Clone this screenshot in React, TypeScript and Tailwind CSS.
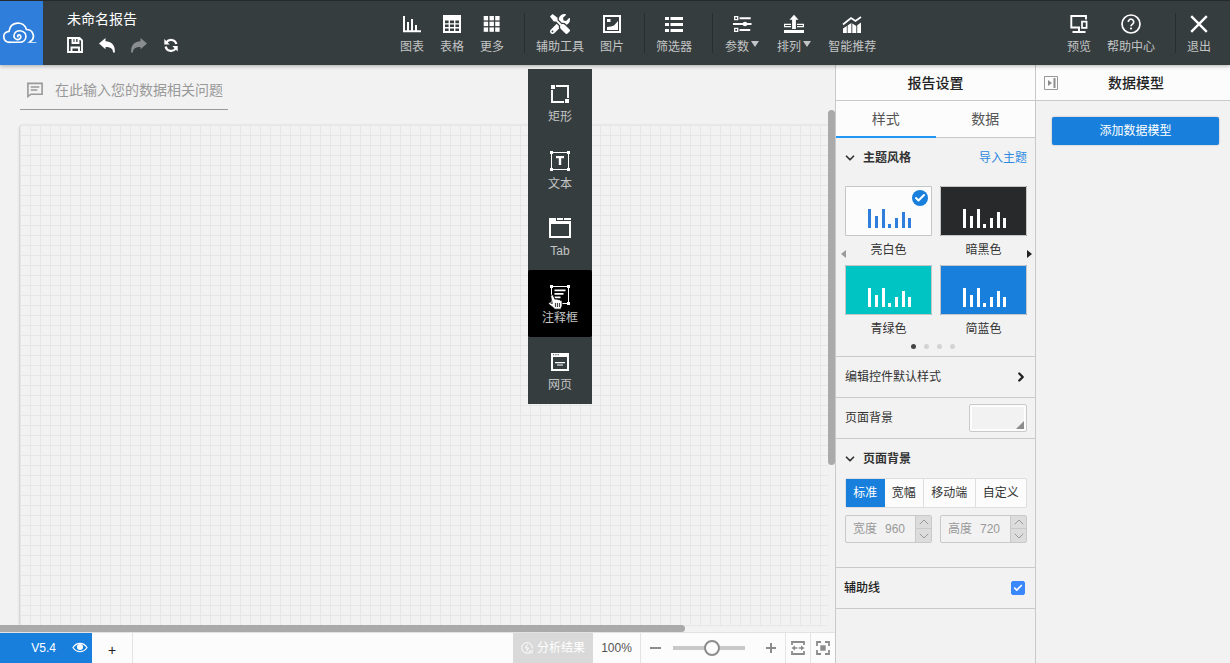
import { ReactNode } from "react";
import clsx from "clsx";
import { FaTools } from "react-icons/fa";
import { Check, ChevronDown, ChevronRight, ChevronUp } from "lucide-react";

type IconProps = { children: ReactNode; className?: string; size?: number };

const Icon = ({ children, className = "h-5 w-5", size = 20 }: IconProps) => (
  <svg
    viewBox={`0 0 ${size} ${size}`}
    className={className}
    fill="currentColor"
    aria-hidden="true"
  >
    {children}
  </svg>
);

const ChartIcon = () => (
  <Icon>
    <path d="M1 2h2v14.300H19v2H1zM5 8h2v8.500H5zM9 5h2v11.500H9zM13 11h2v5.500h-2z" />
  </Icon>
);

const TableIcon = () => (
  <Icon>
    <path
      fillRule="evenodd"
      d="M1 1h18v18H1zM3 6.500v2.700h3.600V6.500zM8 6.500v2.700h4V6.500zM13.400 6.500v2.700H17V6.500zM3 10.500v2.500h3.600v-2.500zM8 10.500v2.500h4v-2.500zM13.400 10.500v2.500H17v-2.500zM3 14.400V17h3.600v-2.600zM8 14.400V17h4v-2.600zM13.400 14.400V17H17v-2.600z"
    />
  </Icon>
);

const MoreIcon = () => (
  <Icon>
    {[2, 7.7, 13.4].map((y) =>
      [1.7, 7.5, 13.2].map((x) => (
        <rect key={`${x}-${y}`} x={x} y={y} width="4.4" height="4.4" />
      ))
    )}
  </Icon>
);

const PictureIcon = () => (
  <Icon>
    <path
      fillRule="evenodd"
      d="M1 1h18v18H1zM3 3v14h14V3z"
    />
    <path d="M5 5h3.500v3H5zM5 16v-3l4-.5 3-1 4-4.500v9z" />
  </Icon>
);

const ListIcon = () => (
  <Icon>
    <path d="M1 3h4v3H1zM6.500 3H19v3H6.500zM1 9h4v3H1zM6.500 9H19v3H6.500zM1 15h4v3H1zM6.500 15H19v3H6.500z" />
  </Icon>
);

const ParamIcon = () => (
  <Icon>
    <g fill="none" stroke="currentColor" strokeWidth="1.300">
      <path d="M2.700 2.700h3v3h-3zM2.700 14.300h3v3h-3z" />
    </g>
    <path d="M7.500 3.200H18.700v2H7.500zM1 9h18.500v2H1zM7.500 14.900H18.200v2H7.500z" />
    <circle cx="13" cy="10" r="2.300" />
  </Icon>
);

const ArrangeIcon = () => (
  <Icon>
    <path d="M10 .8l4.500 5h-2.600V15H8.100V5.800H5.500zM0 16h20v3H0z" />
    <path
      d="M7 10.400H.6v2.200H7M13 10.400h6.400v2.200H13"
      fill="none"
      stroke="currentColor"
      strokeWidth="1.200"
    />
  </Icon>
);

const TrendIcon = () => (
  <Icon>
    <path
      d="M1 10.500l8-6.500 4.500 3L19 3"
      fill="none"
      stroke="currentColor"
      strokeWidth="1.700"
    />
    <path d="M1 14.500l3.800-2.500v7H1zM5.600 11.500L9.400 9v10H5.600zM10.300 9.500l4 2.500v7h-4zM15.200 11.300L19 8.600V19h-3.800z" />
  </Icon>
);

const PreviewIcon = () => (
  <Icon>
    <path
      d="M17 5.500V2H2.300v11.500H11M10 13.500V18M3.500 18h13"
      fill="none"
      stroke="currentColor"
      strokeWidth="1.900"
    />
    <path
      d="M13 7.700h4.600v6.200H13z"
      fill="none"
      stroke="currentColor"
      strokeWidth="1.700"
    />
  </Icon>
);

const HelpIcon = () => (
  <Icon>
    <g fill="none" stroke="currentColor" strokeWidth="1.700">
      <circle cx="10" cy="10" r="9" />
      <path d="M7.300 8a2.700 2.700 0 1 1 4.300 2.100c-1 .7-1.600 1.100-1.600 2.200" />
    </g>
    <circle cx="10" cy="14.500" r="1.100" />
  </Icon>
);

const CloseIcon = () => (
  <Icon>
    <path
      d="M2.200 2.200l15.600 15.600M17.800 2.200L2.200 17.800"
      stroke="currentColor"
      strokeWidth="2.400"
    />
  </Icon>
);

const RectIcon = () => (
  <Icon>
    <path
      d="M6 2h12v12M2 6v12h12"
      fill="none"
      stroke="currentColor"
      strokeWidth="1.900"
    />
    <path d="M1 1h4v4H1zM15 15h4v4h-4z" />
  </Icon>
);

const Frame = () => (
  <>
    <path
      d="M1.500 1.500h17v17h-17z"
      fill="none"
      stroke="currentColor"
    />
    <path d="M0 0h3v3H0zM17 0h3v3h-3zM0 17h3v3H0zM17 17h3v3h-3z" />
  </>
);

const TextIcon = () => (
  <Icon>
    <Frame />
    <path d="M6 5h8v2.200h-2.800V14H8.800V7.200H6z" />
  </Icon>
);

const TabIcon = () => (
  <svg
    viewBox="0 0 22 20"
    className="h-5 w-[22px]"
    fill="currentColor"
    aria-hidden="true"
  >
    <path fillRule="evenodd" d="M0 0h7v3h15v17H0zM2 6v12h18V6z" />
    <path d="M8 0h6v2H8zM15 0h7v2h-7z" />
  </svg>
);

const NoteIcon = () => (
  <Icon>
    <Frame />
    <path d="M4.500 4.500h11v1.800h-11zM4.500 8h9v1.800h-9zM4.500 11.500h6v1.800h-6z" />
  </Icon>
);

const WebIcon = () => (
  <Icon>
    <path
      fillRule="evenodd"
      d="M1 1h18v18H1zM3 5v12h14V5zM3 2.200v1.100h1.200V2.200zM5.300 2.200v1.100h1.200V2.200zM7.600 2.200v1.100h1.200V2.200z"
    />
    <path d="M5 10h10v1.200H5zM7 12.500h6v1H7z" />
  </Icon>
);

const SaveIcon = () => (
  <Icon className="h-4 w-4" size={16}>
    <path
      d="M1 1h11.500L15 3.500V15H1zM5.500 1v5h6V1M4.500 15v-4.500h7.500V15"
      fill="none"
      stroke="currentColor"
      strokeWidth="1.900"
    />
    <path d="M7.500 2h1.700v3H7.500z" />
  </Icon>
);

const UndoIcon = ({ flipped }: { flipped?: boolean }) => (
  <Icon className={clsx("h-4 w-4", flipped && "-scale-x-100")} size={16}>
    <path d="M0 6.500L6.500 1v3.200C12.500 4.500 16.400 8 15.800 15.500H14c.2-4-2.500-5.600-7.500-5.600v2.300z" />
  </Icon>
);

const RefreshIcon = () => (
  <Icon className="h-4 w-4" size={16}>
    <path
      d="M3.400 5.400A5.600 5.600 0 0 1 13.400 7M12.600 11.600A5.600 5.600 0 0 1 2.600 9.500"
      fill="none"
      stroke="currentColor"
      strokeWidth="2.200"
    />
    <path d="M1.300 2v5.400h5.400zM14.700 14.500V9.100H9.300z" />
  </Icon>
);

const CloudLogo = () => (
  <svg viewBox="0 0 35 22" className="h-[22px] w-[35px]" aria-hidden="true">
    <g fill="none" stroke="#fff" strokeLinecap="round">
      <path
        d="M7 20.300C-1 20-1.300 10 6 9.300 7.500-1 21-1.500 23.500 7.500c7 0 9.500 9 3.500 12.200"
        strokeWidth="1.700"
      />
      <path
        d="M7 20.300h9.500c8 0 9-11 .5-11.500-6-.2-8 6.500-3.500 8.600 3.500 1.200 5.800-2.800 3.200-4.400-1.500-.6-2.700.8-1.800 1.800"
        strokeWidth="1.600"
      />
      <path d="M25 20.500h8" strokeWidth=".7" />
    </g>
  </svg>
);

const HandCursor = () => (
  <svg viewBox="0 0 16 16" className="h-4 w-4" aria-hidden="true">
    <path
      d="M3.300 1.200c.8-.8 1.700-.4 2.100.5l1.600 3.700c.5-.8 1.600-.7 1.900.1.600-.6 1.600-.4 1.900.4.700-.5 1.600-.1 1.800.7.9-.2 1.500.4 1.500 1.200v3.500c0 1.500-1.100 2-1.100 3.900H6.500C6 13.500 3.500 12.500.9 10.300c-.9-1 .1-2 1.200-1.600l2.200.9L2.800 2.700c-.1-.6.1-1.100.5-1.500z"
      fill="#fff"
      stroke="#000"
      strokeWidth=".8"
    />
    <path
      d="M7.400 9v4M9.400 9v4M11.400 9v4"
      stroke="#000"
      strokeWidth=".8"
    />
  </svg>
);

const insertItems = [
  { label: "矩形", icon: <RectIcon /> },
  { label: "文本", icon: <TextIcon /> },
  { label: "Tab", icon: <TabIcon /> },
  { label: "注释框", icon: <NoteIcon />, active: true },
  { label: "网页", icon: <WebIcon /> },
];

const themes = [
  { label: "亮白色", bg: "bg-[#fcfcfc]", bar: "text-[#2f7edb]", selected: true },
  { label: "暗黑色", bg: "bg-[#28292b]", bar: "text-white" },
  { label: "青绿色", bg: "bg-[#00c4c4]", bar: "text-white" },
  { label: "简蓝色", bg: "bg-[#197fdc]", bar: "text-white" },
];

const sizes = ["标准", "宽幅", "移动端", "自定义"];

type ToolProps = { icon: ReactNode; label: string; menu?: boolean };

const Tool = ({ icon, label, menu }: ToolProps) => (
  <button
    type="button"
    className={clsx(
      "flex h-16 flex-col items-center gap-[5px] pt-[13px] text-xs leading-4 text-white",
      menu ? "px-[9px]" : "px-2"
    )}
  >
    {icon}
    <span className="flex gap-0.5 whitespace-nowrap text-[#c3c5c5]">
      {label}
      {menu && (
        <svg viewBox="0 0 8 6" className="mt-0.5 h-1.5 w-2" fill="currentColor">
          <path d="M0 0h8L4 6z" />
        </svg>
      )}
    </span>
  </button>
);

const Divider = () => <div className="mr-[3px] ml-3 h-10 w-px bg-[#292e30]" />;

const InsertMenu = () => (
  <div className="absolute top-[68px] left-0 z-20 w-16 bg-[#363d3f]">
    {insertItems.map((item) => (
      <button
        type="button"
        key={item.label}
        className={clsx(
          "relative flex h-[67px] w-full flex-col items-center gap-[5px] pt-[15px] text-xs leading-4 text-white",
          item.active && "rounded-xs bg-black"
        )}
      >
        {item.icon}
        <span className="text-[#c3c5c5]">{item.label}</span>
        {item.active && (
          <span className="absolute top-6 left-5">
            <HandCursor />
          </span>
        )}
      </button>
    ))}
  </div>
);

const Header = () => (
  <header className="relative z-10 flex h-[65px] shrink-0 border-t border-[#26292b] bg-[#363d3f] shadow-[0_1px_4px_rgba(0,0,0,0.3)]">
    <a
      href="#"
      aria-label="首页"
      className="flex w-[43px] shrink-0 items-center bg-[#2f7edb] pl-[3px]"
    >
      <CloudLogo />
    </a>
    <div className="flex w-[349px] shrink-0 flex-col gap-2 pt-2 pl-6 text-white">
      <h1 className="text-sm leading-5">未命名报告</h1>
      <div className="flex gap-4">
        <button type="button" aria-label="保存">
          <SaveIcon />
        </button>
        <button type="button" aria-label="撤销">
          <UndoIcon />
        </button>
        <button type="button" aria-label="重做" className="text-[#8a8d8e]">
          <UndoIcon flipped />
        </button>
        <button type="button" aria-label="刷新">
          <RefreshIcon />
        </button>
      </div>
    </div>
    <nav className="flex items-center">
      <Tool icon={<ChartIcon />} label="图表" />
      <Tool icon={<TableIcon />} label="表格" />
      <Tool icon={<MoreIcon />} label="更多" />
      <Divider />
      <div className="relative">
        <Tool icon={<FaTools className="h-5 w-5" />} label="辅助工具" />
        <InsertMenu />
      </div>
      <Tool icon={<PictureIcon />} label="图片" />
      <Divider />
      <Tool icon={<ListIcon />} label="筛选器" />
      <Divider />
      <Tool icon={<ParamIcon />} label="参数" menu />
      <Tool icon={<ArrangeIcon />} label="排列" menu />
      <Tool icon={<TrendIcon />} label="智能推荐" />
    </nav>
    <div className="ml-auto flex items-center pr-[11px]">
      <Tool icon={<PreviewIcon />} label="预览" />
      <Tool icon={<HelpIcon />} label="帮助中心" />
      <Divider />
      <Tool icon={<CloseIcon />} label="退出" />
    </div>
  </header>
);

const Footer = () => (
  <footer className="flex h-[31px] shrink-0 border-t border-[#e3e3e3] bg-[#fcfcfc] text-xs text-[#555]">
    <button
      type="button"
      className="flex w-[92px] items-center justify-end gap-4 bg-[#197fdc] pr-1 text-white"
    >
      V5.4
      <svg viewBox="0 0 16 12" className="h-3 w-4" aria-hidden="true">
        <path
          d="M1 5.500c3.500-5.500 10.500-5.500 14 0-3.500 5.500-10.500 5.500-14 0z"
          fill="none"
          stroke="#fff"
          strokeWidth="1.200"
        />
        <circle cx="8" cy="5" r="3" fill="#fff" />
      </svg>
    </button>
    <button
      type="button"
      aria-label="新增页面"
      className="w-[41px] border-r border-[#e3e3e3] pt-1 text-sm text-[#222]"
    >
      +
    </button>
    <button
      type="button"
      disabled
      className="ml-auto flex w-20 items-center justify-center gap-1 bg-[#d9d9d9] text-white"
    >
      <svg viewBox="0 0 12 12" className="h-3 w-3" aria-hidden="true">
        <g fill="none" stroke="#fff">
          <path d="M9 10.300A5.300 5.300 0 1 1 11.300 6.500M9 8v3.500M11 8v3.500" />
          <path d="M6.500 2.500L4.500 6h3l-2 3.500" />
        </g>
      </svg>
      分析结果
    </button>
    <span className="flex w-12 items-center justify-center border-r border-[#e3e3e3]">
      100%
    </span>
    <div className="flex w-[145px] items-center gap-3 border-r border-[#e3e3e3] px-2 text-[#8c8c8c]">
      <button type="button" aria-label="缩小">
        <svg viewBox="0 0 12 12" className="h-3 w-3" aria-hidden="true">
          <path d="M1 6h11" stroke="currentColor" strokeWidth="2" />
        </svg>
      </button>
      <input
        type="range"
        aria-label="缩放"
        defaultValue={55}
        className="h-1 w-[72px] appearance-none bg-[#c9c9c9] [&::-webkit-slider-thumb]:h-4 [&::-webkit-slider-thumb]:w-4 [&::-webkit-slider-thumb]:appearance-none [&::-webkit-slider-thumb]:rounded-full [&::-webkit-slider-thumb]:border-2 [&::-webkit-slider-thumb]:border-[#8c8c8c] [&::-webkit-slider-thumb]:bg-[#fcfcfc]"
      />
      <button type="button" aria-label="放大" className="ml-auto">
        <svg viewBox="0 0 12 12" className="h-3 w-3" aria-hidden="true">
          <path d="M1 6h10M6 1v10" stroke="currentColor" strokeWidth="2" />
        </svg>
      </button>
    </div>
    <button
      type="button"
      aria-label="适应宽度"
      className="flex w-[25px] items-center justify-center border-r border-[#e3e3e3] text-[#8c8c8c]"
    >
      <svg viewBox="0 0 14 14" className="h-3.5 w-3.5" aria-hidden="true">
        <path
          d="M1 4V1h12v3M1 10v3h12v-3"
          fill="none"
          stroke="currentColor"
          strokeWidth="1.800"
        />
        <path d="M.5 7l3.500-2.500v1.700h2.300v1.600H4v1.700zM13.500 7L10 4.500v1.700H7.700v1.600H10v1.700z" fill="currentColor" />
      </svg>
    </button>
    <button
      type="button"
      aria-label="全屏"
      className="flex w-6 items-center justify-center text-[#8c8c8c]"
    >
      <svg viewBox="0 0 14 14" className="h-3.5 w-3.5" aria-hidden="true">
        <path
          d="M1 5V1h4M9 1h4v4M13 9v4H9M5 13H1V9"
          fill="none"
          stroke="currentColor"
          strokeWidth="1.800"
        />
        <path d="M4.300 4.300h5.400v5.400H4.300z" fill="currentColor" />
      </svg>
    </button>
  </footer>
);

const Workspace = () => (
  <main className="flex min-w-0 flex-1 flex-col">
    <label className="ml-5 flex h-[45px] w-52 shrink-0 items-center gap-3 border-b border-[#999] pt-1.5 pl-[7px]">
      <Icon className="h-4 w-4 shrink-0 text-[#999]" size={16}>
        <path
          d="M.9 1.400h14.200v10.800H4L.9 14.500z"
          fill="none"
          stroke="currentColor"
          strokeWidth="1.600"
        />
        <path d="M3.700 4.300h8.600v1.500H3.700zM3.700 7.300h6.600v1.500H3.700z" />
      </Icon>
      <input
        type="text"
        aria-label="数据相关问题"
        placeholder="在此输入您的数据相关问题"
        className="w-[173px] bg-transparent text-sm outline-none placeholder:text-[#999]"
      />
    </label>
    <div className="flex min-h-0 flex-1">
      <div className="flex min-w-0 flex-1 pt-[15px] pl-5">
        <div className="flex-1 rounded-tl-sm bg-[linear-gradient(#e6e6e6_1px,transparent_1px),linear-gradient(90deg,#e6e6e6_1px,transparent_1px)] bg-size-[10px_10px] shadow-[-1px_0_2px_rgba(0,0,0,0.15)]" />
      </div>
      <div className="w-[7px]">
        <div className="h-[69%] rounded-full bg-[#aaa]" />
      </div>
    </div>
    <div className="h-[7px] shrink-0">
      <div className="h-full w-[82%] rounded-r-full bg-[#aaa]" />
    </div>
    <Footer />
  </main>
);

const ThemeCard = ({ label, bg, bar, selected }: (typeof themes)[number]) => (
  <button type="button" className="relative flex flex-col text-xs leading-[29px]">
    <svg
      viewBox="0 0 87 50"
      className={clsx("h-[50px] w-full", bg, bar)}
      fill="currentColor"
      aria-hidden="true"
    >
      <path d="M23 23h3v19h-3zM30 30h3v12h-3zM37 23h3v19h-3zM43 38h3v4h-3zM50 32h3v10h-3zM57 26h3v16h-3zM63 32h3v10h-3z" />
      <path d="M.5.5h86v49H.5z" fill="none" stroke="#c6c6c6" />
    </svg>
    <span className="w-full text-center">{label}</span>
    {selected && (
      <span className="absolute top-1 right-1 flex h-4 w-4 items-center justify-center rounded-full bg-[#197fdc]">
        <Check className="h-3 w-3 text-white" strokeWidth={4} />
      </span>
    )}
  </button>
);

const SizeField = ({ label, value }: { label: string; value: number }) => (
  <div className="flex h-7 min-w-0 flex-1 rounded-xs border border-[#c9c9c9] text-xs text-[#999]">
    <label className="flex min-w-0 flex-1 items-center gap-2 pl-[7px]">
      <span className="shrink-0">{label}</span>
      <input
        type="text"
        disabled
        defaultValue={value}
        className="w-0 min-w-0 flex-1 bg-transparent"
      />
    </label>
    <div className="flex w-4 flex-col border-l border-[#c9c9c9] bg-[#dcdcdc]">
      <button
        type="button"
        disabled
        aria-label={`增加${label}`}
        className="flex h-[13px] items-center justify-center border-b border-[#c9c9c9]"
      >
        <ChevronUp className="h-4 w-4 shrink-0" strokeWidth={1.5} />
      </button>
      <button
        type="button"
        disabled
        aria-label={`减少${label}`}
        className="flex h-[13px] items-center justify-center"
      >
        <ChevronDown className="h-4 w-4 shrink-0" strokeWidth={1.5} />
      </button>
    </div>
  </div>
);

const SettingsPanel = () => (
  <aside className="flex w-[200px] shrink-0 flex-col border-l border-[#c9c9c9] text-xs text-[#333]">
    <h2 className="flex h-9 shrink-0 items-center justify-center border-b border-[#c9c9c9] bg-[#fcfcfc] text-sm font-medium text-[#222]">
      报告设置
    </h2>
    <div className="flex h-[37px] shrink-0 bg-[#fcfcfc] text-sm text-[#555]">
      <button type="button" className="flex-1 border-b-2 border-[#2196f3]">
        样式
      </button>
      <button type="button" className="flex-1 border-b border-[#c9c9c9]">
        数据
      </button>
    </div>

    <section className="border-b border-[#c9c9c9] pb-[7px]">
      <div className="flex h-10 items-center pr-2 pl-[7px]">
        <ChevronDown className="mr-1.5 h-3.5 w-3.5" strokeWidth={3} />
        <h3 className="font-bold">主题风格</h3>
        <a href="#" className="ml-auto text-[#2d8ae0]">
          导入主题
        </a>
      </div>
      <div className="relative px-2 pt-2 pl-[9px]">
        <div className="grid grid-cols-2 gap-x-2">
          {themes.map((theme) => (
            <ThemeCard key={theme.label} {...theme} />
          ))}
        </div>
        <button type="button" aria-label="上一页" className="absolute top-[72px] left-[5px]">
          <svg viewBox="0 0 5 8" className="h-2 w-[5px]">
            <path d="M5 0v8L0 4z" fill="#999" />
          </svg>
        </button>
        <button type="button" aria-label="下一页" className="absolute top-[72px] right-[3px]">
          <svg viewBox="0 0 5 8" className="h-2 w-[5px]">
            <path d="M0 0v8l5-4z" fill="#222" />
          </svg>
        </button>
      </div>
      <div className="flex justify-center gap-2 pr-1.5">
        {[0, 1, 2, 3].map((i) => (
          <span
            key={i}
            className={clsx(
              "h-[5px] w-[5px] rounded-full",
              i === 0 ? "bg-[#444]" : "bg-[#d3d3d3]"
            )}
          />
        ))}
      </div>
    </section>

    <button
      type="button"
      className="flex h-[41px] shrink-0 items-center justify-between border-b border-[#c9c9c9] pr-[7px] pl-[9px]"
    >
      编辑控件默认样式
      <ChevronRight className="h-3.5 w-3.5 text-[#222]" strokeWidth={4} />
    </button>

    <div className="flex h-[41px] shrink-0 items-center justify-between border-b border-[#c9c9c9] pr-2 pl-[9px]">
      页面背景
      <button
        type="button"
        aria-label="选择页面背景"
        className="flex h-7 w-[58px] rounded-xs border border-[#c9c9c9] bg-[#fcfcfc] p-0.5"
      >
        <span className="flex h-full flex-1 items-end justify-end bg-[#f2f2f2]">
          <svg viewBox="0 0 8 8" className="h-2 w-2">
            <path d="M8 0v8H0z" fill="#8c8c8c" />
          </svg>
        </span>
      </button>
    </div>

    <section className="border-b border-[#c9c9c9] pr-2 pb-6 pl-[9px]">
      <div className="-ml-0.5 flex h-[39px] items-center">
        <ChevronDown className="mr-1.5 h-3.5 w-3.5" strokeWidth={3} />
        <h3 className="font-bold">页面背景</h3>
      </div>
      <div className="flex h-[30px] rounded-xs border border-[#dedede] bg-[#fcfcfc]">
        {sizes.map((size, i) => (
          <button
            type="button"
            key={size}
            className={clsx(
              "flex-auto whitespace-nowrap",
              i === 0 && "bg-[#197fdc] text-white",
              i > 1 && "border-l border-[#dedede]"
            )}
          >
            {size}
          </button>
        ))}
      </div>
      <div className="mt-[7px] flex gap-2">
        <SizeField label="宽度" value={960} />
        <SizeField label="高度" value={720} />
      </div>
    </section>

    <label className="flex h-[41px] shrink-0 items-center justify-between border-b border-[#c9c9c9] px-2 font-medium text-[#222]">
      辅助线
      <span className="relative flex">
        <input
          type="checkbox"
          defaultChecked
          className="peer mr-0.5 h-3.5 w-3.5 appearance-none rounded-xs border border-[#c9c9c9] checked:border-[#3b88fd] checked:bg-[#3b88fd]"
        />
        <Check
          className="pointer-events-none invisible absolute top-0.5 left-0.5 h-2.5 w-2.5 text-white peer-checked:visible"
          strokeWidth={4}
        />
      </span>
    </label>
  </aside>
);

const DataPanel = () => (
  <aside className="w-[195px] shrink-0 border-l border-[#c9c9c9]">
    <div className="flex h-9 items-center border-b border-[#c9c9c9] bg-[#fcfcfc] px-2">
      <button type="button" aria-label="收起面板">
        <svg viewBox="0 0 14 14" className="h-3.5 w-3.5" aria-hidden="true">
          <path d="M.5.5h13v13H.5z" fill="none" stroke="#999" />
          <path d="M4 4v6l4-3zM9.500 2h2v10h-2z" fill="#8c8c8c" />
        </svg>
      </button>
      <h2 className="flex-1 pr-2 text-center text-sm font-medium text-[#222]">
        数据模型
      </h2>
    </div>
    <div className="p-4 pr-[11px]">
      <button
        type="button"
        className="h-7 w-full rounded-xs bg-[#197fdc] text-xs text-white shadow-[0_0_2px_rgba(0,0,0,0.3)]"
      >
        添加数据模型
      </button>
    </div>
  </aside>
);

export default function App() {
  return (
    <div className="flex h-screen flex-col bg-[#f2f2f2] font-['Liberation_Sans','Noto_Sans_CJK_SC',sans-serif]">
      <Header />
      <div className="flex min-h-0 flex-1">
        <Workspace />
        <SettingsPanel />
        <DataPanel />
      </div>
    </div>
  );
}
